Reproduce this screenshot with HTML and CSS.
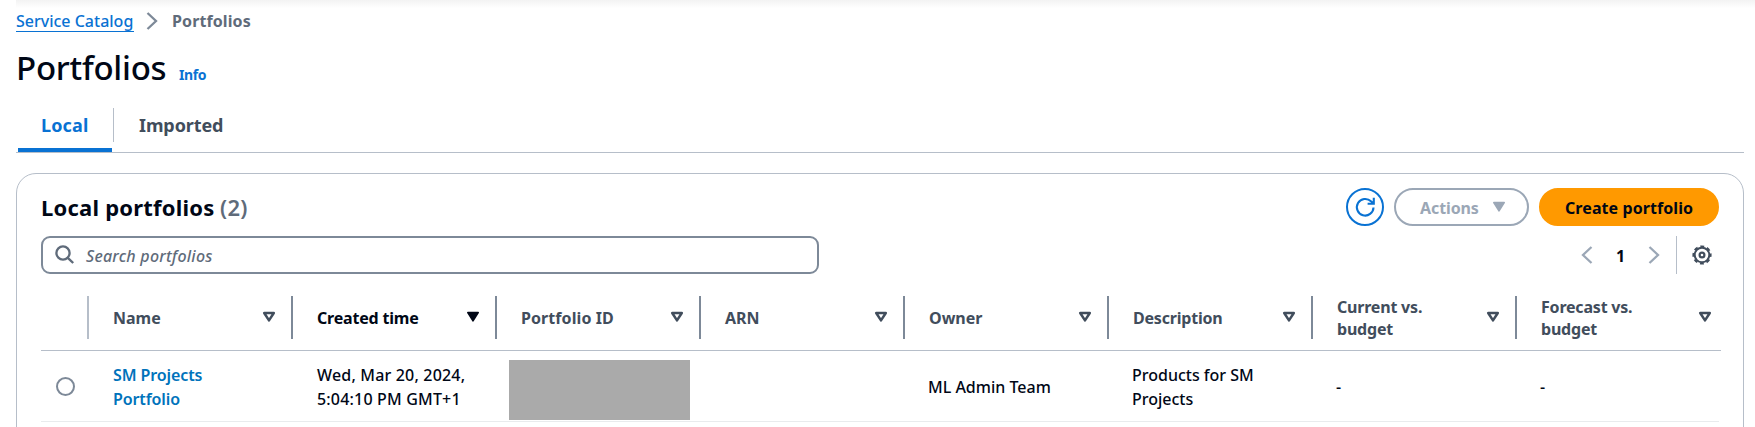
FILE: index.html
```html
<!DOCTYPE html>
<html lang="en">
<head>
<meta charset="utf-8">
<title>Portfolios</title>
<link rel="stylesheet" href="styles.css">
</head>
<body>
<svg class="defs" width="0" height="0">
  <symbol id="sort" viewBox="0 0 14 12"><path d="M2.200 2h9.600L7 9.400z" fill="none" stroke="currentColor" stroke-width="2.500" stroke-linejoin="round"/></symbol>
  <symbol id="sorted" viewBox="0 0 14 12"><path d="M1.800 1.600h10.400L7 9.800z" fill="currentColor" stroke="currentColor" stroke-width="1.600" stroke-linejoin="round"/></symbol>
</svg>
<div class="page">
  <div class="top-shadow"></div>
  <nav class="breadcrumb">
    <a class="crumb-link" href="#">Service Catalog</a>
    <svg class="crumb-chevron" width="12" height="18" viewBox="0 0 12 18"><path d="M1.500 1l8.500 8-8.500 8" fill="none" stroke="#7d8998" stroke-width="2.300"/></svg>
    <span class="crumb-current">Portfolios</span>
  </nav>
  <header class="title-row">
    <h1 class="title">Portfolios</h1>
    <a class="info" href="#">Info</a>
  </header>
  <div class="tabs">
    <div class="tab tab-active"><span class="tab-local">Local</span></div>
    <div class="tab-divider"></div>
    <div class="tab"><span class="tab-imported">Imported</span></div>
  </div>
  <section class="panel">
    <div class="panel-header">
      <h2 class="panel-title">Local portfolios</h2>
      <span class="count">(2)</span>
      <div class="actions">
        <button class="btn btn-refresh" aria-label="Refresh">
          <svg width="22" height="22" viewBox="0 0 22 22"><path d="M19.500 11.500a8.300 8.300 0 1 1-2.500-6.200L19.700 7.500M19.800 1.800v5.900h-6.200" fill="none" stroke="currentColor" stroke-width="2.100"/></svg>
        </button>
        <button class="btn btn-actions"><span class="label-actions">Actions</span>
          <svg width="14" height="12" viewBox="0 0 14 12"><path d="M1.800 1.600h10.400L7 9.800z" fill="currentColor" stroke="currentColor" stroke-width="1.600" stroke-linejoin="round"/></svg>
        </button>
        <button class="btn btn-create"><span class="label-create">Create portfolio</span></button>
      </div>
    </div>
    <div class="toolbar">
      <div class="search">
        <svg width="20" height="20" viewBox="0 0 20 20"><circle cx="8" cy="8" r="6.600" fill="none" stroke="currentColor" stroke-width="2.300"/><path d="M12.800 12.800l5.400 5.200" fill="none" stroke="currentColor" stroke-width="2.400"/></svg>
        <span class="placeholder">Search portfolios</span>
      </div>
      <div class="pager">
        <svg width="12" height="18" viewBox="0 0 12 18"><path d="M10.500 1L2 9l8.500 8" fill="none" stroke="#9ba7b6" stroke-width="2.300"/></svg>
        <span class="page-number">1</span>
        <svg width="12" height="18" viewBox="0 0 12 18"><path d="M1.500 1L10 9l-8.500 8" fill="none" stroke="#9ba7b6" stroke-width="2.300"/></svg>
      </div>
      <div class="settings">
        <svg width="20" height="20" viewBox="0 0 20 20" fill="none" stroke="currentColor"><circle cx="10" cy="10" r="7.300" stroke-width="2"/><circle cx="10" cy="10" r="8.600" stroke-width="2" stroke-dasharray="3.900 2.855" stroke-dashoffset="1.950"/><circle cx="10" cy="10" r="2.400" stroke-width="2.200"/></svg>
      </div>
    </div>
    <div class="table">
      <div class="row head">
        <div class="th th-select"></div>
        <div class="th"><span class="h-name">Name</span><svg class="sort"><use href="#sort"/></svg></div>
        <div class="th sorted"><span class="h-tight">Created time</span><svg class="sort"><use href="#sorted"/></svg></div>
        <div class="th"><span class="h-id">Portfolio ID</span><svg class="sort"><use href="#sort"/></svg></div>
        <div class="th"><span>ARN</span><svg class="sort"><use href="#sort"/></svg></div>
        <div class="th"><span>Owner</span><svg class="sort"><use href="#sort"/></svg></div>
        <div class="th"><span class="h-tight">Description</span><svg class="sort"><use href="#sort"/></svg></div>
        <div class="th"><span class="h-tight">Current vs.<br>budget</span><svg class="sort"><use href="#sort"/></svg></div>
        <div class="th th-last"><span class="h-tight">Forecast vs.<br>budget</span><svg class="sort"><use href="#sort"/></svg></div>
      </div>
      <div class="row body">
        <div class="td td-select"><span class="radio"></span></div>
        <div class="td"><a class="name-link" href="#">SM Projects<br>Portfolio</a></div>
        <div class="td"><span class="c-date">Wed, Mar 20, 2024,<br>5:04:10 PM GMT+1</span></div>
        <div class="td td-redacted"><div class="redacted"></div></div>
        <div class="td"></div>
        <div class="td td-single"><span>ML Admin Team</span></div>
        <div class="td"><span>Products for SM<br>Projects</span></div>
        <div class="td td-single"><span>-</span></div>
        <div class="td td-single"><span>-</span></div>
      </div>
    </div>
  </section>
</div>
</body>
</html>
```
FILE: styles.css
```css
* { box-sizing: border-box; }
body { margin: 0; background: #fff; color: #000716; font-family: "Noto Sans", "Open Sans", sans-serif; font-size: 16px; }
svg { display: block; flex: none; }
a { text-decoration: none; color: #0972d3; }
span, a, h1, h2 { white-space: nowrap; }
.defs { position: absolute; }
.page { height: 427px; overflow: hidden; padding: 0 11px 0 16px; }
.top-shadow { height: 8px; background: linear-gradient(#f3f3f3, #fff); margin-right: -11px; }

.breadcrumb { display: flex; align-items: flex-start; height: 34px; padding-top: 3px; line-height: 20px; }
.crumb-link { width: 118px; height: 21px; border-bottom: 1px solid #0972d3; font-weight: 500; }
.crumb-chevron { margin: 1px 14px 0 12px; }
.crumb-current { color: #5f6b7a; font-weight: 700; letter-spacing: 0.1px; }

.title-row { display: flex; align-items: baseline; height: 66px; line-height: 52px; }
.title { margin: 0; width: 163px; font-size: 33px; font-weight: 500; letter-spacing: -0.25px; }
.info { font-size: 14px; font-weight: 700; letter-spacing: -0.4px; }

.tabs { display: flex; height: 45px; border-bottom: 1px solid #b6bec9; font-size: 18px; font-weight: 700; line-height: 34px; }
.tab { color: #414d5c; padding-left: 25px; letter-spacing: -0.1px; }
.tab-active { width: 94px; margin-left: 2px; padding-left: 23px; letter-spacing: 0.15px; color: #0972d3; border-bottom: 4px solid #0972d3; border-radius: 2px 2px 0 0; }
.tab-divider { width: 1px; height: 34px; margin-left: 1px; background: #b6bec9; }

.panel { margin-top: 20px; height: 300px; border: 1px solid #b6bec9; border-radius: 20px; padding: 14px 22px 0 24px; }
.panel-header { display: flex; height: 38px; align-items: center; }
.panel-title { margin: 0; width: 179px; font-size: 22px; line-height: 38px; letter-spacing: 0.22px; }
.count { color: #5f6b7a; font-size: 22px; font-weight: 600; letter-spacing: 0.3px; }
.actions { display: flex; gap: 10px; margin: 0 2px 0 auto; }
.btn { display: flex; align-items: center; height: 38px; padding: 0; background: #fff; border: 2px solid; border-radius: 19px; font: 700 16px "Noto Sans", sans-serif; }
.btn-refresh { width: 38px; padding-left: 6px; color: #0972d3; }
.btn-actions { width: 135px; padding-left: 24px; color: #9ba7b6; }
.label-actions { width: 72px; padding-top: 2px; text-align: left; letter-spacing: -0.1px; }
.btn-create { width: 180px; padding-left: 24px; color: #000716; background: #f90; border-color: #f90; }
.label-create { padding-top: 2px; letter-spacing: 0.08px; }

.toolbar { display: flex; align-items: center; height: 38px; margin-top: 10px; }
.search { display: flex; align-items: center; width: 778px; height: 38px; border: 2px solid #7d8998; border-radius: 9px; padding-left: 12px; color: #5f6b7a; }
.placeholder { margin-left: 11px; padding-top: 2px; font-style: italic; font-weight: 500; letter-spacing: 0.23px; }
.pager { display: flex; align-items: center; margin-left: auto; }
.page-number { width: 11px; margin: 0 22px; padding-top: 1px; text-align: center; font-weight: 700; }
.settings { display: flex; align-items: center; height: 38px; margin: 0 9px 0 16px; padding-left: 15px; border-left: 1px solid #b6bec9; color: #414d5c; }

.table { margin-top: 15px; }
.row { display: grid; grid-template-columns: 48px repeat(7, 204px) 204px; }
.head { width: 1680px; height: 62px; border-bottom: 1px solid #b6bec9; color: #414d5c; font-weight: 700; line-height: 22px; }
.th { display: flex; align-items: center; height: 43px; margin-top: 7px; padding-left: 24px; border-right: 2px solid #7d8998; }
.th-select { border-color: #b6bec9; }
.th-last { border: 0; width: 210px; }
.sorted { color: #000716; }
.h-tight { letter-spacing: -0.2px; }
.h-id { letter-spacing: 0.08px; }
.sort { width: 14px; height: 12px; margin: -1px 15px 0 auto; }
.body { width: 1678px; height: 71px; border-bottom: 1px solid #e9ebed; line-height: 24px; font-weight: 500; }
.td { display: flex; align-items: center; padding: 1px 0 0 23px; }
.td-single { padding-top: 2px; }
.td-select { padding: 0 0 0 15px; }
.radio { width: 19px; height: 19px; border: 2px solid #7d8998; border-radius: 50%; }
.name-link { color: #0073bb; font-weight: 600; padding-left: 1px; letter-spacing: -0.1px; }
.c-date { padding-left: 1px; letter-spacing: 0.18px; }
.td-redacted { align-items: flex-start; padding: 9px 0 0 12px; }
.redacted { width: 181px; height: 60px; background: #aaa; }
```
